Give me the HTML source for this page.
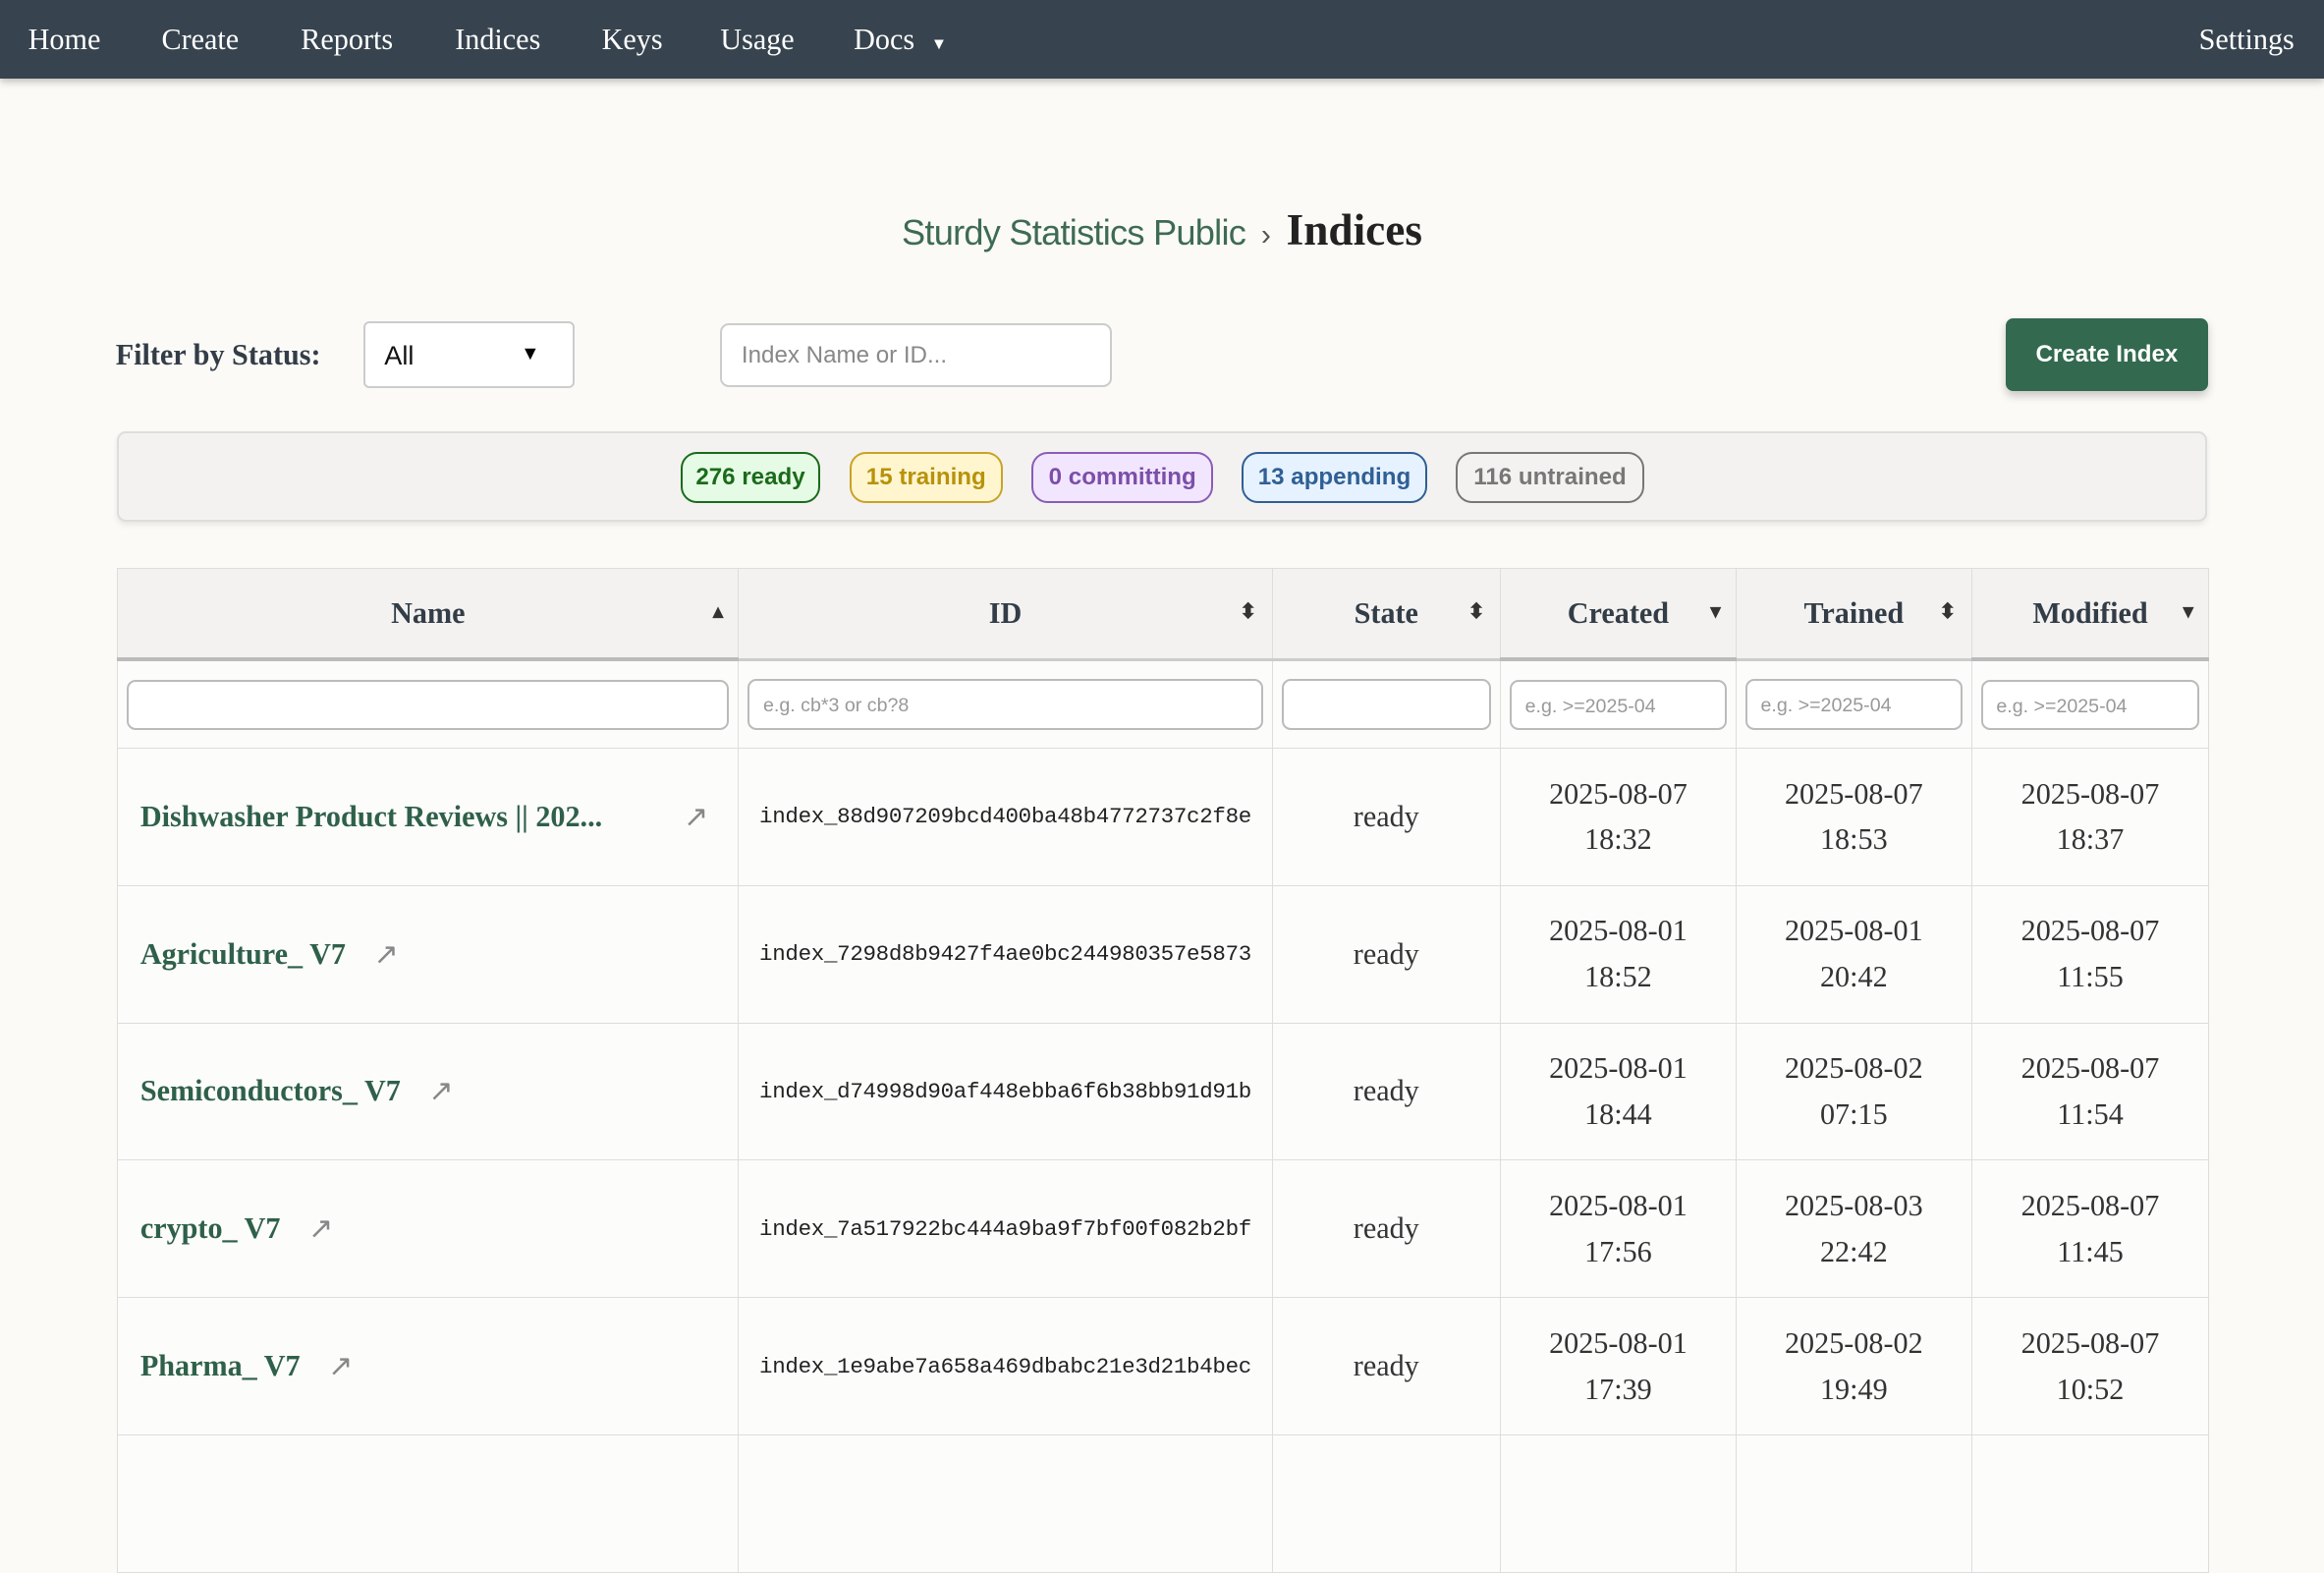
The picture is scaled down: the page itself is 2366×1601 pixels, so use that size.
<!DOCTYPE html>
<html><head><meta charset="utf-8"><style>
html{zoom:1.5089}
body{margin:0;width:1568px;height:984px;overflow:hidden;background:#fbfaf7;font-family:"Liberation Sans",sans-serif;position:relative}
.a{position:absolute}
.nav{left:0;top:0;width:1568px;height:53px;background:#37444f;box-shadow:0 2px 5px rgba(0,0,0,.25)}
.nav span{position:absolute;top:15px;color:#fff;font-family:"Liberation Serif",serif;font-size:20px}
.serif{font-family:"Liberation Serif",serif}
.pill{position:absolute;top:305px;height:32px;line-height:32px;border:1.5px solid;border-radius:11px;font-weight:bold;font-size:16px;text-align:center;box-sizing:content-box}
table{position:absolute;left:79px;top:383px;border-collapse:collapse;width:1411px;table-layout:fixed}
td,th{border:1px solid #ddd;padding:0;text-align:center}
th{height:60px;background:#f3f2f0;font-family:"Liberation Serif",serif;font-size:20px;color:#333d47;font-weight:bold;position:relative;border-bottom:2px solid #ccc}
th.s{border-bottom:3px solid #bbb}
th i{position:absolute;right:10px;top:20px;font-style:normal;font-size:14px;color:#333}
tr.f td{height:58px;background:#fcfcfb}
tr.f div{margin:0 6px;height:34px;border:1.5px solid #bbb;border-radius:6px;background:#fff;text-align:left;font-size:13px;color:#999;line-height:34px;padding-left:9px;box-sizing:border-box}
tr.r td{height:92px;background:#fcfcfb;font-size:20px;color:#333;font-family:"Liberation Serif",serif}
tr.r td.n{text-align:left;padding-left:15px;font-weight:bold;color:#2f6049;white-space:nowrap}
td.n b{color:#888;font-weight:normal;margin-left:14px;font-family:"DejaVu Sans",sans-serif;font-size:20px}
tr.r td.id{font-family:"Liberation Mono",monospace;font-size:14.9px;color:#222;letter-spacing:-0.2px}
tr.r td.d{line-height:31px}
</style></head><body>
<div class="a nav">
<span style="left:19px">Home</span><span style="left:109px">Create</span><span style="left:203px">Reports</span><span style="left:307px">Indices</span><span style="left:406px">Keys</span><span style="left:486px">Usage</span><span style="left:576px">Docs <small style="font-size:11px;margin-left:6px">▼</small></span><span style="right:20px">Settings</span>
</div>
<div class="a" style="left:0;width:1568px;top:138px;text-align:center">
<span style="font-size:24px;color:#3e6b52;letter-spacing:-0.5px">Sturdy Statistics Public</span>
<span style="font-size:20px;color:#555;margin:0 6px">›</span>
<span class="serif" style="font-size:30px;font-weight:bold;color:#222">Indices</span></div>
<div class="a serif" style="left:78px;top:228px;font-size:20px;font-weight:bold;color:#333d47">Filter by Status:</div>
<div class="a" style="left:245px;top:217px;width:143px;height:45px;border:1.5px solid #ccc;border-radius:4px;background:#fff;box-sizing:border-box">
<span class="a" style="left:13px;top:11px;font-size:18px;color:#111">All</span><span class="a" style="left:105px;top:13px;font-size:13px">▼</span></div>
<div class="a" style="left:486px;top:218px;width:264px;height:43px;border:1.5px solid #ccc;border-radius:6px;background:#fff;box-sizing:border-box">
<span class="a" style="left:13px;top:11px;font-size:16px;color:#888">Index Name or ID...</span></div>
<div class="a" style="left:1353px;top:215px;width:137px;height:49px;background:#336a4f;border-radius:5px;box-shadow:0 3px 6px rgba(0,0,0,.2);color:#fff;font-weight:bold;font-size:16px;text-align:center;line-height:49px">Create Index</div>
<div class="a" style="left:79px;top:291px;width:1410px;height:61px;background:#f3f2f0;border:1.5px solid #ddd;border-radius:6px;box-sizing:border-box;box-shadow:0 2px 4px rgba(0,0,0,.08)"></div>
<div class="pill" style="left:459px;width:92px;color:#1a6b1a;border-color:#1a6b1a;background:#e6fbe6">276 ready</div>
<div class="pill" style="left:573px;width:101px;color:#b8920a;border-color:#c9a227;background:#fff6cf">15 training</div>
<div class="pill" style="left:696px;width:120px;color:#7b4fa8;border-color:#8a5cb8;background:#f2e6ff">0 committing</div>
<div class="pill" style="left:838px;width:122px;color:#2f5f95;border-color:#2f5f95;background:#e6f2ff">13 appending</div>
<div class="pill" style="left:982px;width:125px;color:#777;border-color:#777;background:#f3f2f0">116 untrained</div>
<table>
<colgroup><col style="width:419px"><col style="width:360px"><col style="width:154px"><col style="width:159px"><col style="width:159px"><col style="width:160px"></colgroup>
<tr><th class="s">Name<i>▴</i></th><th>ID<i>⬍</i></th><th>State<i>⬍</i></th><th class="s">Created<i>▾</i></th><th>Trained<i>⬍</i></th><th class="s">Modified<i>▾</i></th></tr>
<tr class="f"><td><div></div></td><td><div>e.g. cb*3 or cb?8</div></td><td><div></div></td><td><div>e.g. &gt;=2025-04</div></td><td><div>e.g. &gt;=2025-04</div></td><td><div>e.g. &gt;=2025-04</div></td></tr>
<tr class="r"><td class="n">Dishwasher Product Reviews || 202... <b style="margin-left:50px">↗</b></td><td class="id">index_88d907209bcd400ba48b4772737c2f8e</td><td>ready</td><td class="d">2025-08-07<br>18:32</td><td class="d">2025-08-07<br>18:53</td><td class="d">2025-08-07<br>18:37</td></tr>
<tr class="r"><td class="n">Agriculture_ V7 <b>↗</b></td><td class="id">index_7298d8b9427f4ae0bc244980357e5873</td><td>ready</td><td class="d">2025-08-01<br>18:52</td><td class="d">2025-08-01<br>20:42</td><td class="d">2025-08-07<br>11:55</td></tr>
<tr class="r"><td class="n">Semiconductors_ V7 <b>↗</b></td><td class="id">index_d74998d90af448ebba6f6b38bb91d91b</td><td>ready</td><td class="d">2025-08-01<br>18:44</td><td class="d">2025-08-02<br>07:15</td><td class="d">2025-08-07<br>11:54</td></tr>
<tr class="r"><td class="n">crypto_ V7 <b>↗</b></td><td class="id">index_7a517922bc444a9ba9f7bf00f082b2bf</td><td>ready</td><td class="d">2025-08-01<br>17:56</td><td class="d">2025-08-03<br>22:42</td><td class="d">2025-08-07<br>11:45</td></tr>
<tr class="r"><td class="n">Pharma_ V7 <b>↗</b></td><td class="id">index_1e9abe7a658a469dbabc21e3d21b4bec</td><td>ready</td><td class="d">2025-08-01<br>17:39</td><td class="d">2025-08-02<br>19:49</td><td class="d">2025-08-07<br>10:52</td></tr>
<tr class="r"><td class="n"></td><td></td><td></td><td></td><td></td><td></td></tr>
</table>
</body></html>
